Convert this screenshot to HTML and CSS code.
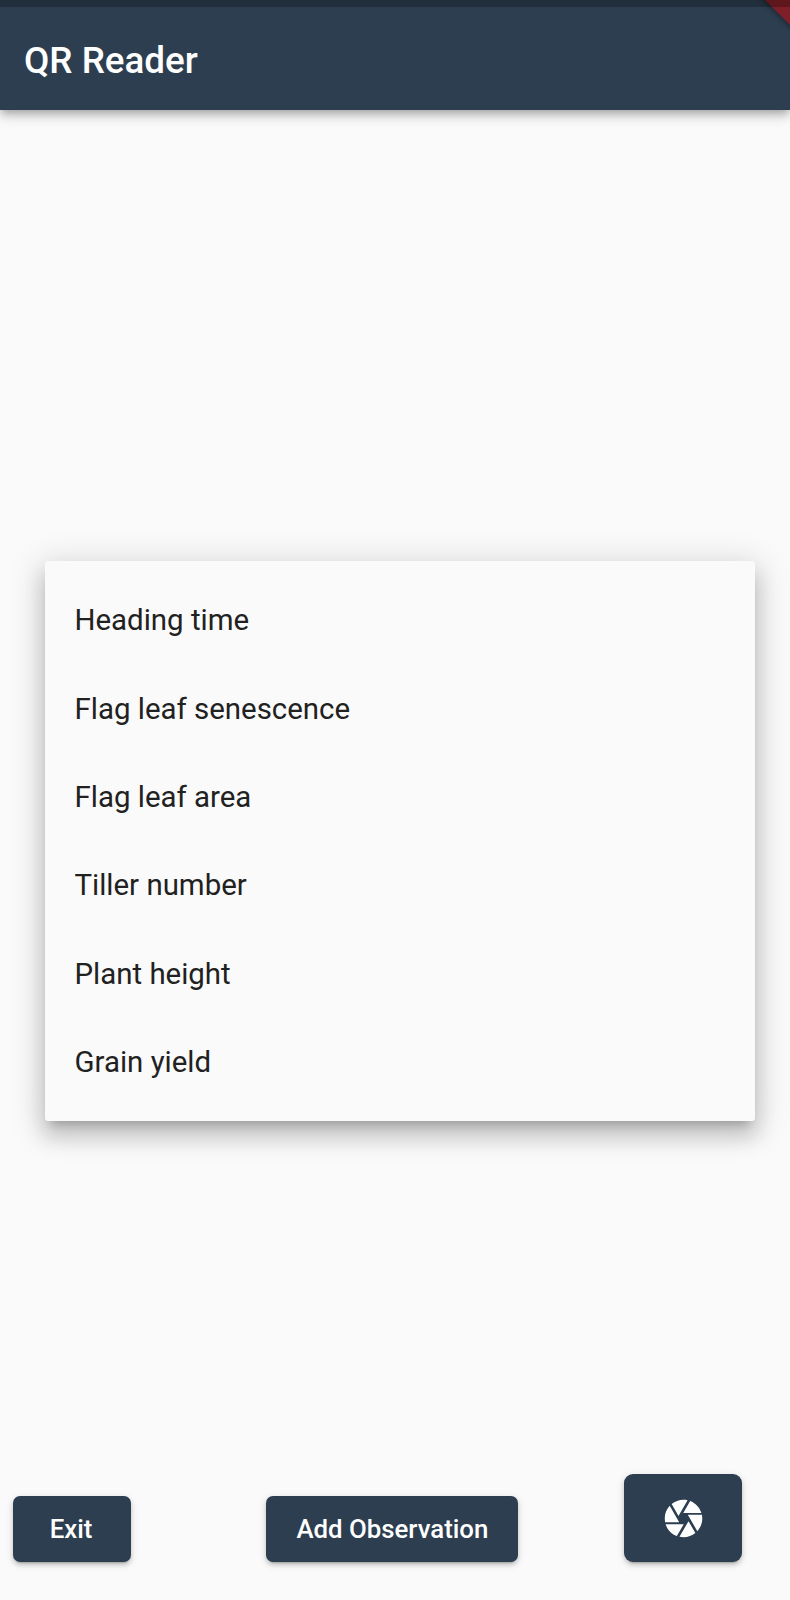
FILE: index.html
```html
<!DOCTYPE html>
<html lang="en">
<head>
<meta charset="utf-8">
<title>QR Reader</title>
<link rel="stylesheet" href="styles.css">
</head>
<body>
<div class="screen">
  <header class="app-bar">
    <h1 class="title">QR Reader</h1>
    <svg class="ribbon" viewBox="0 0 60 60">
      <defs><filter id="soft" x="-30%" y="-30%" width="160%" height="160%"><feGaussianBlur stdDeviation="3"/></filter></defs>
      <path d="M26-8 67 33V-8z" fill="#000" opacity=".5" filter="url(#soft)"/>
      <path d="M27-8 68 33V-8z" fill="#7f1f29"/>
    </svg>
    <div class="status-shade"></div>
  </header>
  <main class="content">
    <ul class="menu">
      <li class="item">Heading time</li>
      <li class="item">Flag leaf senescence</li>
      <li class="item">Flag leaf area</li>
      <li class="item">Tiller number</li>
      <li class="item">Plant height</li>
      <li class="item">Grain yield</li>
    </ul>
  </main>
  <footer class="actions">
    <button class="button exit">Exit</button>
    <button class="button add">Add Observation</button>
    <button class="button camera" aria-label="Scan">
      <svg class="shutter" viewBox="0 0 24 24"><path fill="currentColor" d="M9.4 10.5l4.77-8.26C13.47 2.09 12.75 2 12 2c-2.4 0-4.6.85-6.32 2.25l3.66 6.35.06-.1zM21.54 9c-.92-2.92-3.15-5.26-6-6.34L11.88 9h9.66zm.26 1h-7.49l.29.5 4.76 8.25C21 16.97 22 14.61 22 12c0-.69-.07-1.35-.2-2zM8.54 12l-3.9-6.75C3.01 7.03 2 9.39 2 12c0 .69.07 1.35.2 2h7.49l-1.15-2zm-6.08 3c.92 2.92 3.15 5.26 6 6.34L12.12 15H2.46zm11.27 0l-3.9 6.76c.7.15 1.42.24 2.17.24 2.4 0 4.6-.85 6.32-2.25l-3.66-6.35-.93 1.6z"/></svg>
    </button>
  </footer>
</div>
</body>
</html>
```
FILE: styles.css
```css
* {
  box-sizing: border-box;
}

body {
  margin: 0;
  background: #fafafa;
  font-family: Roboto, "Liberation Sans", sans-serif;
}

.screen {
  display: flex;
  flex-direction: column;
  height: 1600px;
  overflow: hidden;
}

.app-bar {
  position: relative;
  display: flex;
  align-items: center;
  height: 110px;
  padding: 12px 24px 0;
  background: #2d3e50;
  color: #fff;
  box-shadow: 0 4px 7px -2px rgba(0, 0, 0, .2), 0 7px 9px rgba(0, 0, 0, .12), 0 2px 18px rgba(0, 0, 0, .12);
}

.title {
  margin: 0;
  font-size: 36.8px;
  font-weight: 500;
  line-height: 44px;
}

.ribbon {
  position: absolute;
  top: 0;
  right: 0;
  width: 60px;
  height: 60px;
}

.status-shade {
  position: absolute;
  top: 0;
  left: 0;
  width: 100%;
  height: 7px;
  background: rgba(0, 0, 0, .25);
}

.content {
  flex: 1;
  padding: 451px 35.5px 0 45px;
}

.menu {
  height: 560px;
  margin: 0;
  padding: 15px 0 14px;
  list-style: none;
  background: #fafafa;
  border-radius: 3px;
  box-shadow: 0 9px 9px -6px rgba(0, 0, 0, .2), 0 15px 20px 2px rgba(0, 0, 0, .14), 0 6px 32px 6px rgba(0, 0, 0, .13);
}

.item {
  display: flex;
  align-items: center;
  height: 88.4px;
  padding-left: 29.5px;
  color: #212121;
  font-size: 29.43px;
}

.actions {
  display: flex;
  align-items: flex-end;
  padding: 0 48px 38px 13px;
}

.button {
  display: flex;
  align-items: center;
  justify-content: center;
  height: 66.5px;
  padding: 0;
  border: 0;
  border-radius: 7px;
  background: #2d3e50;
  color: #fff;
  font: 500 25.8px Roboto, "Liberation Sans", sans-serif;
  box-shadow: 0 5px 2px -4px rgba(0, 0, 0, .2), 0 3px 4px rgba(0, 0, 0, .14), 0 2px 8px rgba(0, 0, 0, .12);
}

.exit {
  width: 118px;
  padding-right: 2px;
}

.add {
  width: 252px;
  margin: 0 106px 0 135.4px;
}

.camera {
  width: 117.6px;
  height: 88.5px;
  border-radius: 9px;
}

.shutter {
  width: 45px;
  height: 45px;
  margin-top: 1px;
}
```
